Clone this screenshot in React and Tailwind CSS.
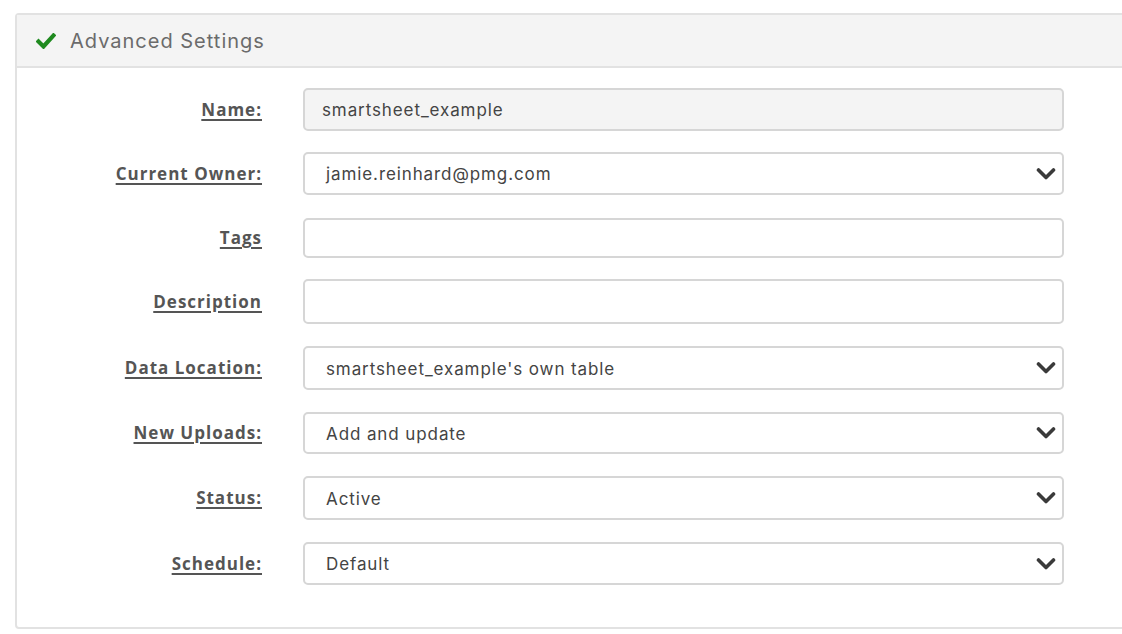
import React from "react";

const rows = [
  { label: "Name:", value: "smartsheet_example", kind: "readonly", h: "h-[43px]", mt: "" },
  { label: "Current Owner:", value: "jamie.reinhard@pmg.com", kind: "select", h: "h-[43px]", mt: "mt-[21px]" },
  { label: "Tags", value: "", kind: "input", h: "h-[40px]", mt: "mt-[23px]" },
  { label: "Description", value: "", kind: "input", h: "h-[45px]", mt: "mt-[21px]" },
  { label: "Data Location:", value: "smartsheet_example's own table", kind: "select", h: "h-[44px]", mt: "mt-[22px]" },
  { label: "New Uploads:", value: "Add and update", kind: "select", h: "h-[42px]", mt: "mt-[22px]" },
  { label: "Status:", value: "Active", kind: "select", h: "h-[44px]", mt: "mt-[22px]" },
  { label: "Schedule:", value: "Default", kind: "select", h: "h-[43px]", mt: "mt-[22px]" },
];

const Chevron = () => (
  <svg width="20" height="14" viewBox="0 0 20 14" className="shrink-0">
    <polyline
      points="2.5,3 10,10.5 17.5,3"
      fill="none"
      stroke="#3a3a3a"
      strokeWidth="3.6"
      strokeLinecap="round"
      strokeLinejoin="round"
    />
  </svg>
);

const Check = () => (
  <svg width="20" height="16" viewBox="0 0 20 16">
    <polyline
      points="2.5,8.5 7.5,13.5 17.5,2.5"
      fill="none"
      stroke="#1f8a1f"
      strokeWidth="4.2"
      strokeLinecap="square"
    />
  </svg>
);

const Field = ({ row }) => {
  const base = `w-[761px] ${row.h} border-2 border-[#d6d6d6] rounded-[5px] text-[17px] tracking-[0.9px] text-[#444]`;
  if (row.kind === "readonly") {
    return <div className={`${base} flex items-center pl-[17px] pt-[3px] bg-[#f4f4f4]`}>{row.value}</div>;
  }
  if (row.kind === "select") {
    return (
      <div className={`${base} flex items-center justify-between pl-[21px] pr-[6px] bg-white`}>
        <span className="pt-[3px]">{row.value}</span>
        <Chevron />
      </div>
    );
  }
  return <div className={`${base} bg-white`} />;
};

export default function App() {
  return (
    <div className="w-[1122px] h-[634px] overflow-hidden bg-white pt-[13px] pl-[15px] font-['Inter',sans-serif]">
      <div className="w-[1200px] border-2 border-[#e2e2e2] rounded-tl-[4px] rounded-bl-[4px]">
        <div className="h-[53px] bg-[#f4f4f4] border-b-2 border-[#e2e2e2] flex items-center pl-[19px] gap-[14px]">
          <Check />
          <span className="text-[20px] text-[#6b6b6b] tracking-[1px]">Advanced Settings</span>
        </div>
        <div className="pt-[20px] pb-[42px] flex flex-col">
          {rows.map((row) => (
            <div key={row.label} className={`flex items-center ${row.mt}`}>
              <div className="w-[245px] text-right">
                <span className="font-['Open_Sans',sans-serif] font-bold text-[17px] tracking-[1px] text-[#555] underline underline-offset-[3px] decoration-[2px]">
                  {row.label}
                </span>
              </div>
              <div className="ml-[41px]">
                <Field row={row} />
              </div>
            </div>
          ))}
        </div>
      </div>
    </div>
  );
}
